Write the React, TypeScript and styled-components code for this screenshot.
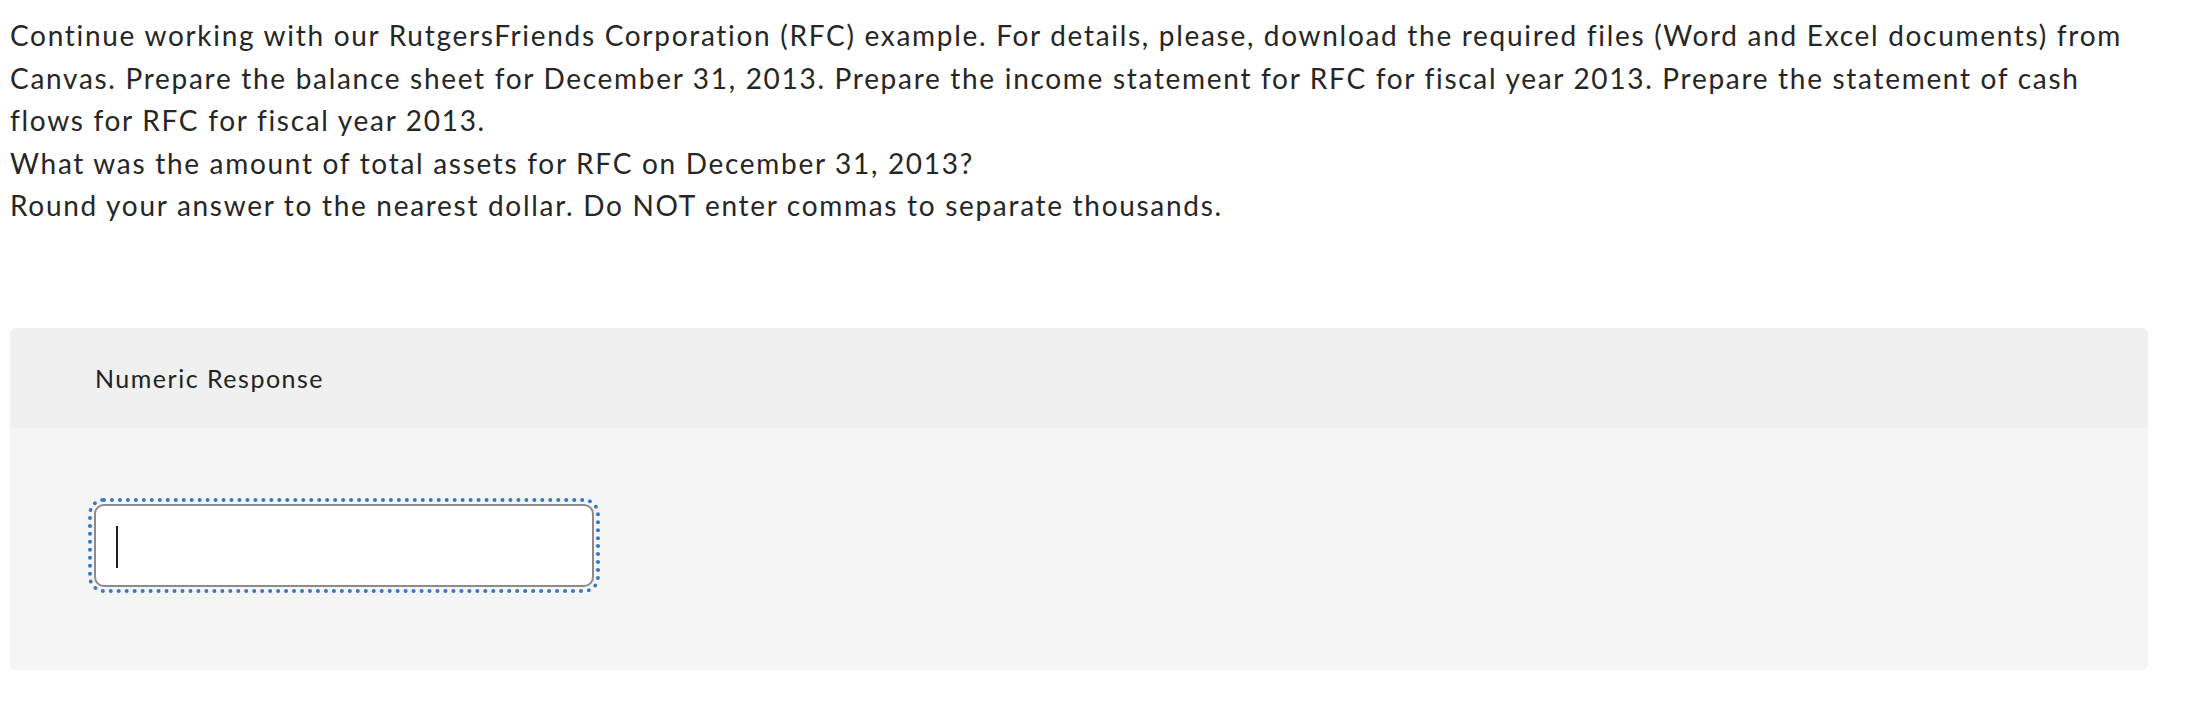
import React from "react";
import styled, { createGlobalStyle } from "styled-components";

const GlobalStyle = createGlobalStyle`
  html, body {
    margin: 0;
    padding: 0;
    background: #ffffff;
  }
  body {
    font-family: Lato, "Open Sans", "Liberation Sans", sans-serif;
    color: #262626;
    font-variant-ligatures: none;
  }
`;

const Page = styled.main`
  width: 2138px;
  padding: 14px 0 0 10px;
  display: flex;
  flex-direction: column;
`;

const Prompt = styled.div`
  font-size: 28px;
  line-height: 42.5px;
  letter-spacing: 1.7px;
  color: #262626;
`;

const Line = styled.p`
  margin: 0;
`;

const Panel = styled.section`
  margin-top: 101px;
  border-radius: 6px;
  overflow: hidden;
  display: flex;
  flex-direction: column;
`;

const PanelHeader = styled.header`
  height: 100px;
  background: #f0f0f0;
  display: flex;
  align-items: center;
  padding-left: 85px;
  font-size: 25px;
  letter-spacing: 1.5px;
  color: #222222;
`;

const PanelBody = styled.div`
  background: #f5f5f5;
  padding: 76px 0 83px 84px;
  display: flex;
`;

const Field = styled.div`
  position: relative;
  width: 500px;
  height: 83px;
  box-sizing: border-box;
  border: 2px solid #8c8c8c;
  border-radius: 10px;
  background: #ffffff;
  outline: 4px dotted #3478c6;
  outline-offset: 2px;
  display: flex;
  align-items: center;
`;

const Input = styled.input`
  width: 100%;
  height: 100%;
  box-sizing: border-box;
  border: none;
  border-radius: 8px;
  background: transparent;
  padding: 0 20px;
  font-family: Lato, "Open Sans", sans-serif;
  font-size: 28px;
  color: #222222;
  caret-color: transparent;
  outline: none;
`;

const Caret = styled.span`
  position: absolute;
  left: 20px;
  top: 20px;
  width: 2px;
  height: 42px;
  background: #1e1e1e;
  pointer-events: none;
`;

export default function App() {
  return (
    <>
      <GlobalStyle />
      <Page>
        <Prompt>
          <Line>
            Continue working with our RutgersFriends Corporation (RFC) example. For details, please, download the required files (Word and Excel documents) from Canvas. Prepare the balance sheet for December 31, 2013. Prepare the income statement for RFC for fiscal year 2013. Prepare the statement of cash flows for RFC for fiscal year 2013.
          </Line>
          <Line>What was the amount of total assets for RFC on December 31, 2013?</Line>
          <Line>Round your answer to the nearest dollar. Do NOT enter commas to separate thousands.</Line>
        </Prompt>
        <Panel>
          <PanelHeader>Numeric Response</PanelHeader>
          <PanelBody>
            <Field>
              <Input type="text" aria-label="Numeric Response" />
              <Caret />
            </Field>
          </PanelBody>
        </Panel>
      </Page>
    </>
  );
}
